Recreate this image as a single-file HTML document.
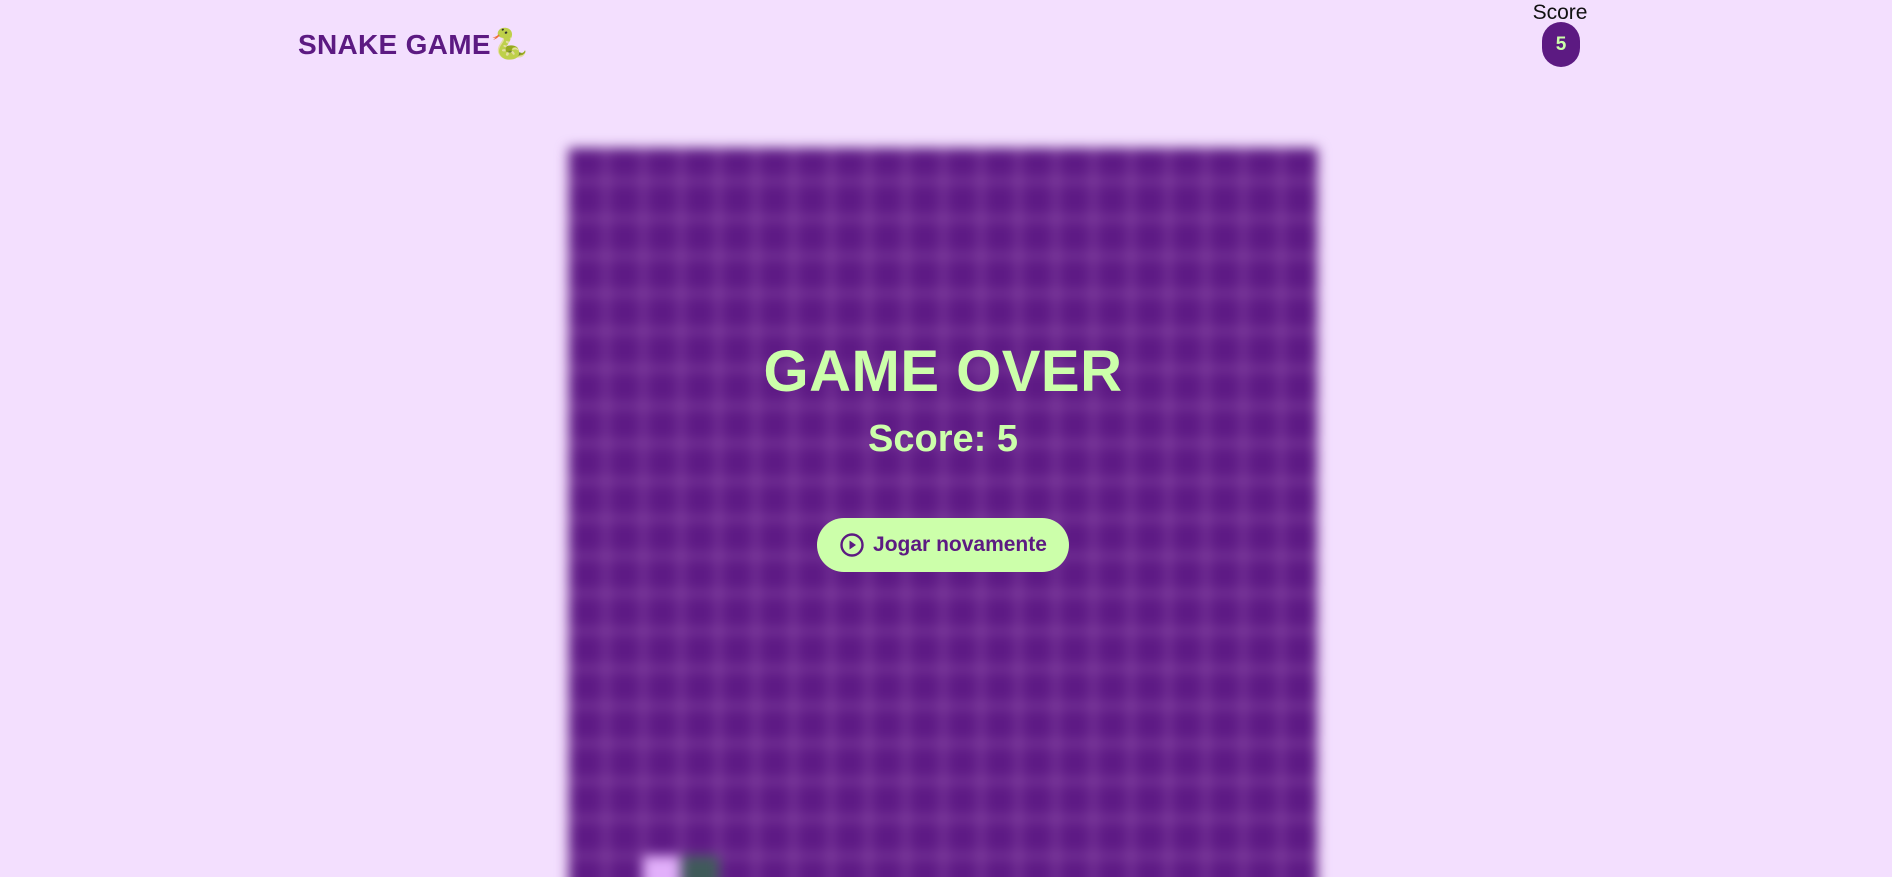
<!DOCTYPE html>
<html><head><meta charset="utf-8"><style>
html,body{margin:0;padding:0;width:1892px;height:877px;overflow:hidden;background:#f3dffe;font-family:"Liberation Sans",sans-serif;}
.logo{position:absolute;left:298px;top:27px;font-weight:bold;font-size:28px;color:#5c1a82;letter-spacing:0.3px;}
.sl{position:absolute;left:1520px;width:80px;text-align:center;top:1px;font-size:21px;color:#111;}
.badge{position:absolute;left:1542px;top:22px;width:38px;height:45px;border-radius:19px;background:#5c1a82;color:#ccffaa;font-weight:bold;font-size:19px;text-align:center;line-height:45px;}
.clip{position:absolute;left:548px;top:128px;width:790px;height:749px;overflow:hidden;}
.boardwrap{position:absolute;left:20px;top:20px;width:750px;height:745px;filter:blur(6px);}
.board{width:100%;height:100%;background-color:#5e1a85;
background-image:linear-gradient(90deg,rgba(170,110,190,.45) 0 5px,transparent 5px),linear-gradient(0deg,rgba(170,110,190,.45) 0 5px,transparent 5px);
background-size:37.5px 37.5px;background-position:-2px -2px;position:relative;}
.p1{position:absolute;left:75px;top:708px;width:37px;height:37px;background:#e2b0fb;}
.p2{position:absolute;left:114px;top:708px;width:37px;height:37px;background:#3f5a5a;}
.go{position:absolute;left:568px;width:750px;text-align:center;top:338px;font-weight:bold;font-size:58px;color:#ccffaa;letter-spacing:0.5px;}
.sc{position:absolute;left:568px;width:750px;text-align:center;top:418px;font-weight:bold;font-size:38px;color:#ccffaa;}
.btn{position:absolute;left:817px;top:518px;width:252px;height:54px;border-radius:27px;background:#ccffaa;color:#5c1a82;font-size:21px;font-weight:bold;display:flex;align-items:center;justify-content:center;gap:8px;}
</style></head><body>
<div class="logo">SNAKE GAME<span style="font-size:30px;font-family:'Liberation Sans','DejaVu Sans',sans-serif">🐍</span></div>
<div class="sl">Score</div>
<div class="badge">5</div>
<div class="clip"><div class="boardwrap"><div class="board"><div class="p1"></div><div class="p2"></div></div></div></div>
<div class="go">GAME OVER</div>
<div class="sc">Score: 5</div>
<div class="btn"><svg width="26" height="26" viewBox="0 0 26 26"><circle cx="13" cy="13" r="10.5" fill="none" stroke="#5c1a82" stroke-width="2.4"/><path d="M10.5 8.5 L17 13 L10.5 17.5Z" fill="#5c1a82"/></svg><span>Jogar novamente</span></div>
</body></html>
